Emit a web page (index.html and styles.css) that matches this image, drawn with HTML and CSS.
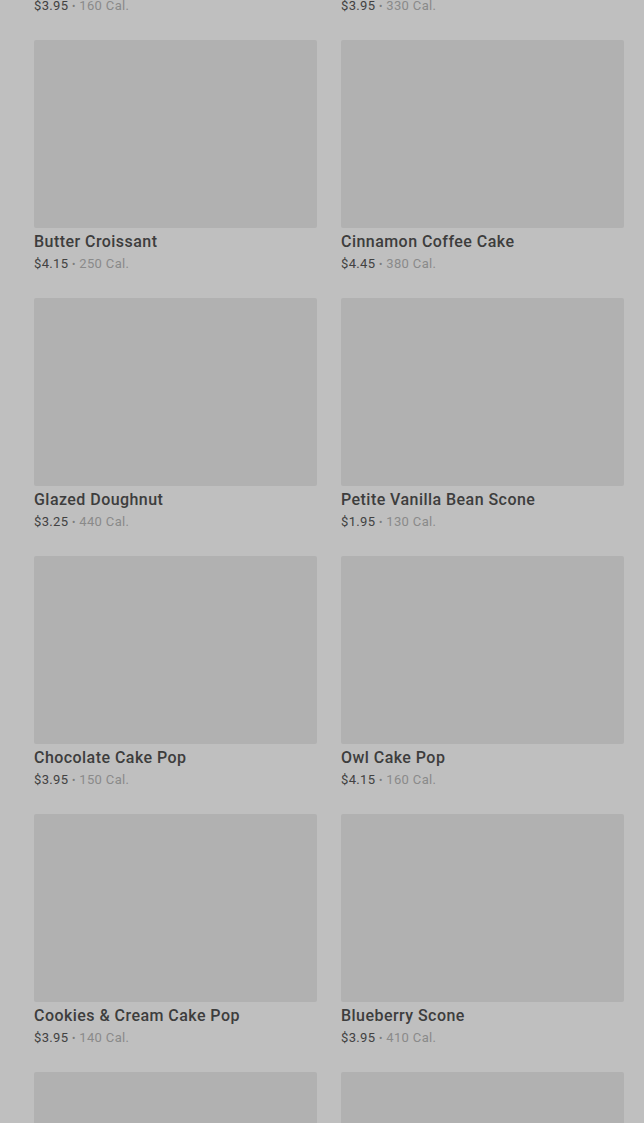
FILE: index.html
```html
<!DOCTYPE html>
<html lang="en">
<head>
    <meta charset="UTF-8">
    <meta name="viewport" content="width=device-width, initial-scale=1.0">
    <title>Bakery</title>
    <link rel="stylesheet" href="styles.css">
</head>
<body>
    <div class="menu">
        <div class="item">
            <div class="photo"></div>
            <h3 class="name">Banana Nut Bread</h3>
            <p class="info"><span class="price">$3.95</span> <span class="dot">•</span> <span class="cal">160 Cal.</span></p>
        </div>
        <div class="item">
            <div class="photo"></div>
            <h3 class="name">Pumpkin Loaf</h3>
            <p class="info"><span class="price">$3.95</span> <span class="dot">•</span> <span class="cal">330 Cal.</span></p>
        </div>
        <div class="item">
            <div class="photo"></div>
            <h3 class="name">Butter Croissant</h3>
            <p class="info"><span class="price">$4.15</span> <span class="dot">•</span> <span class="cal">250 Cal.</span></p>
        </div>
        <div class="item">
            <div class="photo"></div>
            <h3 class="name">Cinnamon Coffee Cake</h3>
            <p class="info"><span class="price">$4.45</span> <span class="dot">•</span> <span class="cal">380 Cal.</span></p>
        </div>
        <div class="item">
            <div class="photo"></div>
            <h3 class="name">Glazed Doughnut</h3>
            <p class="info"><span class="price">$3.25</span> <span class="dot">•</span> <span class="cal">440 Cal.</span></p>
        </div>
        <div class="item">
            <div class="photo"></div>
            <h3 class="name">Petite Vanilla Bean Scone</h3>
            <p class="info"><span class="price">$1.95</span> <span class="dot">•</span> <span class="cal">130 Cal.</span></p>
        </div>
        <div class="item">
            <div class="photo"></div>
            <h3 class="name">Chocolate Cake Pop</h3>
            <p class="info"><span class="price">$3.95</span> <span class="dot">•</span> <span class="cal">150 Cal.</span></p>
        </div>
        <div class="item">
            <div class="photo"></div>
            <h3 class="name">Owl Cake Pop</h3>
            <p class="info"><span class="price">$4.15</span> <span class="dot">•</span> <span class="cal">160 Cal.</span></p>
        </div>
        <div class="item">
            <div class="photo"></div>
            <h3 class="name">Cookies &amp; Cream Cake Pop</h3>
            <p class="info"><span class="price">$3.95</span> <span class="dot">•</span> <span class="cal">140 Cal.</span></p>
        </div>
        <div class="item">
            <div class="photo"></div>
            <h3 class="name">Blueberry Scone</h3>
            <p class="info"><span class="price">$3.95</span> <span class="dot">•</span> <span class="cal">410 Cal.</span></p>
        </div>
        <div class="item">
            <div class="photo"></div>
        </div>
        <div class="item">
            <div class="photo"></div>
        </div>
    </div>
</body>
</html>
```

FILE: styles.css
```css
html, body {
    margin: 0;
    background: #bfbfbf;
    overflow: hidden;
}
body {
    font-family: Roboto, "Liberation Sans", sans-serif;
    height: 1123px;
}
.menu {
    display: grid;
    grid-template-columns: 283px 283px;
    column-gap: 24px;
    row-gap: 25px;
    padding: 0 20px 0 34px;
    margin-top: -218px;
}
.item {
    display: flex;
    flex-direction: column;
}
.photo {
    height: 188px;
    background: #b1b1b1;
    border-radius: 2px;
}
.name {
    margin: 4px 0 0;
    font-size: 16px;
    line-height: 20px;
    font-weight: 500;
    color: #3d3d3d;
    letter-spacing: 0.45px;
}
.info {
    margin: 3px 0 0;
    font-size: 13px;
    line-height: 18px;
    height: 18px;
    letter-spacing: 0.35px;
}
.price { color: #424242; }
.dot { color: #7c7c7c; font-size: 10px; }
.cal { color: #8a8a8a; }
```
